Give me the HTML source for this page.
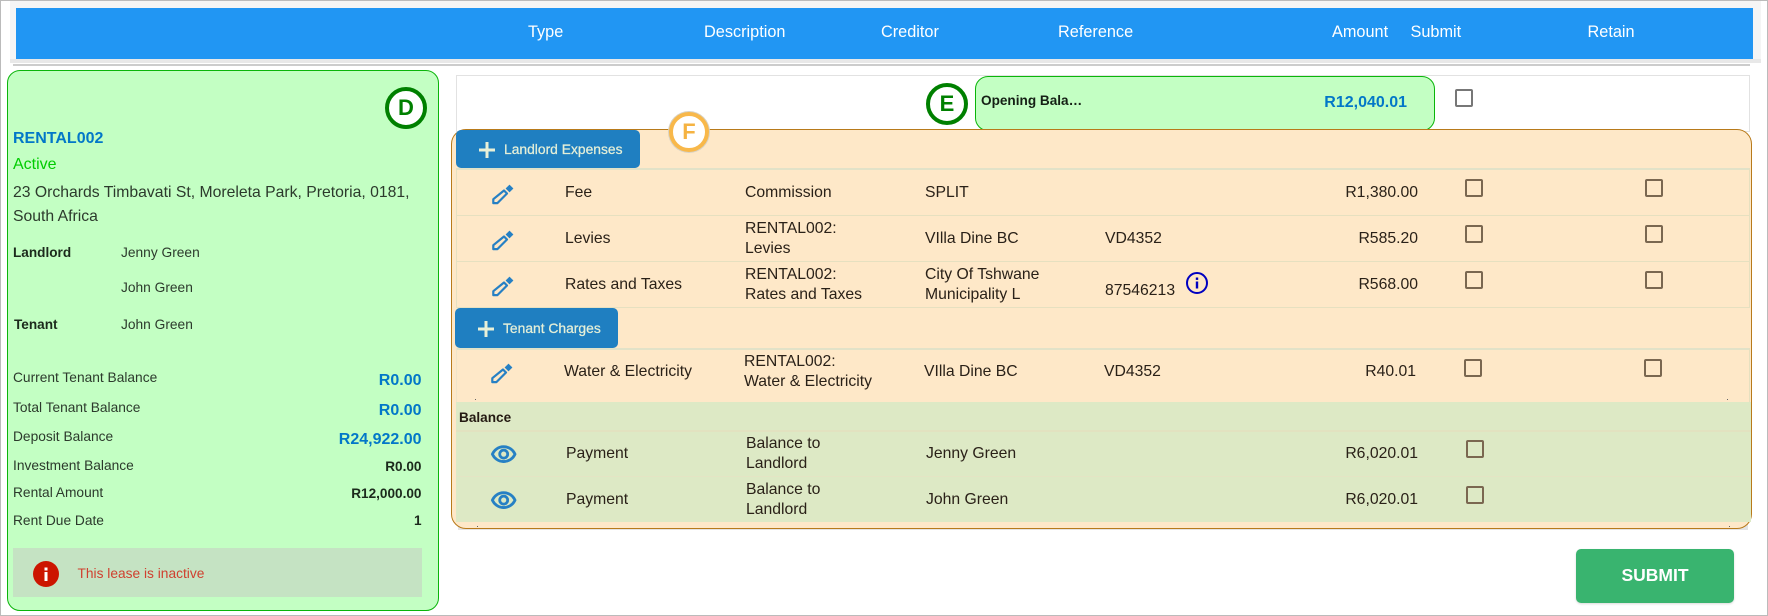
<!DOCTYPE html>
<html>
<head>
<meta charset="utf-8">
<style>
html,body{margin:0;padding:0;background:#fff}
#p{position:relative;width:1768px;height:616px;overflow:hidden;background:#fff;font-family:"Liberation Sans",sans-serif;color:#222}
#p div,#p span.a,#p svg{position:absolute}
.t{position:absolute;white-space:nowrap;line-height:20px;height:20px;font-size:15.75px;color:#2a2118;margin-top:1px}
.h{color:#fff;font-size:16.3px;top:21px}
.s{font-size:13.75px;color:#2c3a2c}
.b{font-weight:bold;color:#1c2a1c;font-size:13.6px}
.v{font-weight:bold;font-size:16px;color:#0277c8;text-align:right;right:1346.5px}
.w{font-weight:bold;font-size:13.6px;color:#1c2a1c;text-align:right;right:1346.5px}
.r{text-align:right}
.c{position:absolute;width:14px;height:14px;border:2px solid #7a6750;border-radius:2px}
.ln{left:456px;width:1293px;height:1px;background:#e6e0c0}
.circ{width:34px;height:34px;border:4px solid #008000;border-radius:50%;background:#fff;color:#008000;font-weight:bold;font-size:22px;line-height:34px;text-align:center}
.dot{width:1px;height:1px;background:#666}
</style>
</head>
<body>
<div id="p">
<svg width="0" height="0" style="left:0;top:0">
<defs>
<g id="pen"><path d="M16 10.5L19 13.5L9.4 23.1H5.3V19.2Z" fill="none" stroke="#2680c4" stroke-width="2.2" stroke-linejoin="round"/><path d="M21.5 4.6L25.4 8.5L21.5 12.4L17.6 8.5Z" fill="#2680c4"/></g>
<g id="eye"><path fill="#2680c4" stroke="#2680c4" stroke-width=".45" d="M12 6c3.79 0 7.17 2.13 8.82 5.5C19.17 14.87 15.79 17 12 17s-7.17-2.13-8.82-5.5C4.83 8.13 8.21 6 12 6m0-2C7 4 2.73 7.11 1 11.5 2.73 15.89 7 19 12 19s9.27-3.11 11-7.5C21.27 7.11 17 4 12 4zm0 5c1.38 0 2.5 1.12 2.5 2.5S13.38 14 12 14s-2.5-1.12-2.5-2.5S10.62 9 12 9m0-2c-2.48 0-4.5 2.02-4.5 4.5S9.52 16 12 16s4.5-2.02 4.5-4.5S14.48 7 12 7z"/></g>
</defs>
</svg>
<!-- page frame -->
<div style="left:0;top:0;width:1766px;height:614px;border:1px solid #bbb;border-width:1px 1.5px 1.5px 1.5px"></div>

<!-- header -->
<div style="left:10px;top:1px;width:1751px;height:62px;background:#f5f5f5"></div>
<div style="left:7px;top:3px;width:3px;height:33px;background:#fff"></div>
<div style="left:10px;top:59px;width:1751px;height:4px;background:#e8e8e8"></div>
<div style="left:13px;top:64px;width:1737px;height:2px;background:#ccc"></div>
<div style="left:16px;top:8px;width:1737px;height:51px;background:#2196f3"></div>
<span class="t h" style="left:528px">Type</span>
<span class="t h" style="left:704px">Description</span>
<span class="t h" style="left:881px">Creditor</span>
<span class="t h" style="left:1058px">Reference</span>
<span class="t h" style="left:1332px">Amount</span>
<span class="t h" style="left:1410.5px">Submit</span>
<span class="t h" style="left:1587.5px">Retain</span>

<!-- left panel -->
<div style="left:7px;top:70px;width:430px;height:539px;border:1.2px solid #0ab50a;border-radius:13px;background:#c3ffc3"></div>
<div class="circ" style="left:385px;top:87px">D</div>
<span class="t" style="left:13px;top:128px;font-size:16px;font-weight:bold;color:#0277c8">RENTAL002</span>
<span class="t" style="left:13px;top:154px;font-size:16px;color:#00cc00">Active</span>
<span class="t" style="left:13px;top:182px;color:#2c3a2c">23 Orchards Timbavati St, Moreleta Park, Pretoria, 0181,</span>
<span class="t" style="left:13px;top:206px;color:#2c3a2c">South Africa</span>
<span class="t b" style="left:13px;top:242px">Landlord</span>
<span class="t s" style="left:121px;top:242px">Jenny Green</span>
<span class="t s" style="left:121px;top:277px">John Green</span>
<span class="t b" style="left:14px;top:314px">Tenant</span>
<span class="t s" style="left:121px;top:314px">John Green</span>
<span class="t s" style="left:13px;top:367px">Current Tenant Balance</span>
<span class="t s" style="left:13px;top:397px">Total Tenant Balance</span>
<span class="t s" style="left:13px;top:426px">Deposit Balance</span>
<span class="t s" style="left:13px;top:455px">Investment Balance</span>
<span class="t s" style="left:13px;top:482px">Rental Amount</span>
<span class="t s" style="left:13px;top:510px">Rent Due Date</span>
<span class="t v" style="top:370px">R0.00</span>
<span class="t v" style="top:400px">R0.00</span>
<span class="t v" style="top:429px">R24,922.00</span>
<span class="t w" style="top:456px">R0.00</span>
<span class="t w" style="top:483px">R12,000.00</span>
<span class="t w" style="top:510px">1</span>
<div style="left:13px;top:548px;width:409px;height:49px;background:#c5e3c3"></div>
<svg style="left:33px;top:561px" width="26" height="26" viewBox="0 0 26 26"><circle cx="13" cy="13" r="13" fill="#cc1500"/><rect x="11.5" y="11" width="3" height="9" fill="#fff"/><rect x="11.5" y="6.5" width="3" height="3" fill="#fff"/></svg>
<span class="t" style="left:77.5px;top:563px;font-size:13.75px;color:#d0402f">This lease is inactive</span>

<!-- right white box -->
<div style="left:456px;top:75px;width:1292px;height:55px;border:1.5px solid #e2e2e2;background:#fff"></div>
<div class="circ" style="left:926px;top:83px">E</div>
<div style="left:975px;top:76px;width:458px;height:53px;border:1.2px solid #0ab50a;border-radius:13px;background:#c3ffc3"></div>
<span class="t b" style="left:981px;top:90px;color:#152015">Opening Bala…</span>
<span class="t" style="left:1200px;width:207px;text-align:right;top:92px;font-size:16px;font-weight:bold;color:#0277c8">R12,040.01</span>
<div class="c" style="left:1455px;top:89px;border-color:#777"></div>

<!-- orange box -->
<div style="left:458px;top:520px;width:1290px;height:10px;background:#e4e4e4"></div>
<div style="left:451px;top:129px;width:1299px;height:398px;border:1.2px solid #b87a1a;border-radius:15px;background:#fee8c8"></div>
<div style="left:456px;top:402px;width:1295px;height:120px;background:#dde9c5"></div>
<div style="left:456px;top:430px;width:1295px;height:2px;background:#e2e2c0"></div>
<div style="left:456px;top:476px;width:1295px;height:1px;background:#e4e4c4"></div>
<div class="dot" style="left:475px;top:399px"></div>
<div class="dot" style="left:1727px;top:399px"></div>
<div class="dot" style="left:477px;top:526px"></div>
<div class="dot" style="left:1729px;top:526px"></div>

<!-- table 1 lines -->
<div style="left:456px;top:168px;width:1293px;height:2px;background:#e2e2c8"></div>
<div class="ln" style="top:215px"></div>
<div class="ln" style="top:261px"></div>
<div class="ln" style="top:307px"></div>
<div style="left:456px;top:168px;width:1px;height:140px;background:#e6e0c0"></div>
<div style="left:1749px;top:168px;width:1px;height:140px;background:#e6e0c0"></div>
<!-- table 2 lines -->
<div style="left:456px;top:348px;width:1293px;height:2px;background:#e2e2c8"></div>
<div style="left:456px;top:348px;width:1px;height:54px;background:#f0e4c8"></div>
<div style="left:1749px;top:348px;width:1px;height:54px;background:#e6e0c0"></div>

<!-- F -->
<div style="left:668px;top:111px;width:42px;height:42px;border-radius:50%;background:#d8d2c4"></div>
<div class="circ" style="left:669px;top:112px;border-color:#f8b84a;color:#f5b342;width:32px;height:32px;line-height:32px">F</div>

<!-- buttons -->
<div style="left:456px;top:130px;width:184px;height:38px;background:#1f7fc1;border-radius:5px"></div>
<svg style="left:478px;top:141px" width="18" height="18" viewBox="0 0 18 18"><path d="M7.5 1h3v6.5H17v3h-6.5V17h-3v-6.5H1v-3h6.5z" fill="#e8f0d8"/></svg>
<span class="t" style="left:504px;top:138px;font-size:13.85px;color:#e4efd8;-webkit-text-stroke:.25px #e4efd8">Landlord Expenses</span>
<div style="left:455px;top:308px;width:163px;height:40px;background:#1f7fc1;border-radius:5px"></div>
<svg style="left:477px;top:320px" width="18" height="18" viewBox="0 0 18 18"><path d="M7.5 1h3v6.5H17v3h-6.5V17h-3v-6.5H1v-3h6.5z" fill="#e8f0d8"/></svg>
<span class="t" style="left:503px;top:317px;font-size:13.85px;color:#e4efd8;-webkit-text-stroke:.25px #e4efd8">Tenant Charges</span>

<!-- row 1 -->
<svg style="left:488px;top:180px" width="28" height="28" viewBox="0 0 28 28"><use href="#pen"/></svg>
<span class="t" style="left:565px;top:182px">Fee</span>
<span class="t" style="left:745px;top:182px">Commission</span>
<span class="t" style="left:925px;top:182px">SPLIT</span>
<span class="t r" style="right:350px;top:182px">R1,380.00</span>
<div class="c" style="left:1465px;top:179px"></div>
<div class="c" style="left:1645px;top:179px"></div>

<!-- row 2 -->
<svg style="left:488px;top:226px" width="28" height="28" viewBox="0 0 28 28"><use href="#pen"/></svg>
<span class="t" style="left:565px;top:228px">Levies</span>
<span class="t" style="left:745px;top:218px">RENTAL002:</span>
<span class="t" style="left:745px;top:238px">Levies</span>
<span class="t" style="left:925px;top:228px">VIlla Dine BC</span>
<span class="t" style="left:1105px;top:228px">VD4352</span>
<span class="t r" style="right:350px;top:228px">R585.20</span>
<div class="c" style="left:1465px;top:225px"></div>
<div class="c" style="left:1645px;top:225px"></div>

<!-- row 3 -->
<svg style="left:488px;top:272px" width="28" height="28" viewBox="0 0 28 28"><use href="#pen"/></svg>
<span class="t" style="left:565px;top:274px">Rates and Taxes</span>
<span class="t" style="left:745px;top:264px">RENTAL002:</span>
<span class="t" style="left:745px;top:284px">Rates and Taxes</span>
<span class="t" style="left:925px;top:264px">City Of Tshwane</span>
<span class="t" style="left:925px;top:284px">Municipality L</span>
<span class="t" style="left:1105px;top:280px">87546213</span>
<svg style="left:1186px;top:272px" width="22" height="22" viewBox="0 0 22 22"><circle cx="11" cy="11" r="10" fill="none" stroke="#0000c0" stroke-width="2"/><rect x="9.8" y="9.5" width="2.4" height="7" fill="#0000c0"/><rect x="9.8" y="5.5" width="2.4" height="2.4" fill="#0000c0"/></svg>
<span class="t r" style="right:350px;top:274px">R568.00</span>
<div class="c" style="left:1465px;top:271px"></div>
<div class="c" style="left:1645px;top:271px"></div>

<!-- water -->
<svg style="left:487px;top:359px" width="28" height="28" viewBox="0 0 28 28"><use href="#pen"/></svg>
<span class="t" style="left:564px;top:361px">Water &amp; Electricity</span>
<span class="t" style="left:744px;top:351px">RENTAL002:</span>
<span class="t" style="left:744px;top:371px">Water &amp; Electricity</span>
<span class="t" style="left:924px;top:361px">VIlla Dine BC</span>
<span class="t" style="left:1104px;top:361px">VD4352</span>
<span class="t r" style="right:352px;top:361px">R40.01</span>
<div class="c" style="left:1464px;top:359px"></div>
<div class="c" style="left:1644px;top:359px"></div>

<!-- balance -->
<span class="t b" style="left:459px;top:407px;color:#241a12">Balance</span>
<svg style="left:490px;top:441px" width="27.4" height="27.4" viewBox="0 0 24 24"><use href="#eye"/></svg>
<span class="t" style="left:566px;top:443px">Payment</span>
<span class="t" style="left:746px;top:433px">Balance to</span>
<span class="t" style="left:746px;top:453px">Landlord</span>
<span class="t" style="left:926px;top:443px">Jenny Green</span>
<span class="t r" style="right:350px;top:443px">R6,020.01</span>
<div class="c" style="left:1466px;top:440px"></div>

<svg style="left:490px;top:487px" width="27.4" height="27.4" viewBox="0 0 24 24"><use href="#eye"/></svg>
<span class="t" style="left:566px;top:489px">Payment</span>
<span class="t" style="left:746px;top:479px">Balance to</span>
<span class="t" style="left:746px;top:499px">Landlord</span>
<span class="t" style="left:926px;top:489px">John Green</span>
<span class="t r" style="right:350px;top:489px">R6,020.01</span>
<div class="c" style="left:1466px;top:486px"></div>

<!-- submit -->
<div style="left:1576px;top:549px;width:158px;height:54px;background:#39b46f;border-radius:5px;box-shadow:0 1px 2px rgba(0,0,0,.15)"></div>
<span class="t" style="left:1576px;width:158px;text-align:center;top:564px;font-size:17.5px;font-weight:bold;color:#fff">SUBMIT</span>
</div>
</body>
</html>
